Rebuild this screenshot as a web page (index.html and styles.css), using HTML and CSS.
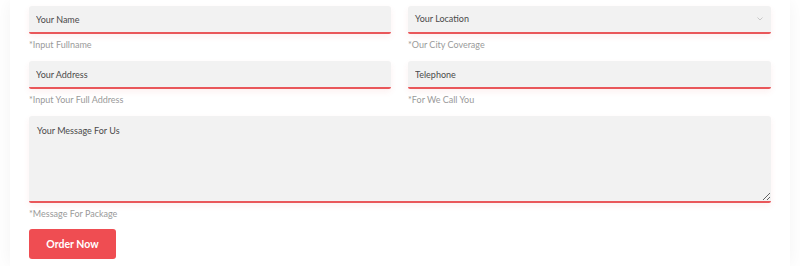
FILE: index.html
```html
<!DOCTYPE html>
<html lang="en">
<head>
    <meta charset="UTF-8">
    <meta name="viewport" content="width=device-width, initial-scale=1.0">
    <title>Order Form</title>
    <link rel="stylesheet" href="styles.css">
</head>
<body>
    <div class="container">
        <form class="order-form">
            <div class="grid">
                <div class="field">
                    <input class="input" type="text" placeholder="Your Name">
                    <span class="help">*Input Fullname</span>
                </div>
                <div class="field">
                    <div class="select">
                        <span class="select-text">Your Location</span>
                        <svg class="arrow" width="6" height="4" viewBox="0 0 6 4">
                            <path d="M0.5 0.5 L3 3 L5.5 0.5" fill="none" stroke="#c8c8c8" stroke-width="1"/>
                        </svg>
                    </div>
                    <span class="help">*Our City Coverage</span>
                </div>
                <div class="field">
                    <input class="input" type="text" placeholder="Your Address">
                    <span class="help">*Input Your Full Address</span>
                </div>
                <div class="field">
                    <input class="input" type="text" placeholder="Telephone">
                    <span class="help">*For We Call You</span>
                </div>
                <div class="field wide">
                    <textarea class="input message" placeholder="Your Message For Us"></textarea>
                    <span class="help">*Message For Package</span>
                </div>
            </div>
            <button class="btn" type="button">Order Now</button>
        </form>
    </div>
</body>
</html>
```

FILE: styles.css
```css
* {
    padding: 0;
    margin: 0;
    box-sizing: border-box;
}

html, body {
    height: 100%;
    background-color: #ffffff;
    font-family: Lato, "Open Sans", Arial, sans-serif;
}

.container {
    margin: 0 10px;
    height: 100%;
    padding: 6px 19px 0 19px;
    box-shadow: 0 0 18px rgba(0, 0, 0, 0.05);
}

.grid {
    display: grid;
    grid-template-columns: 362px 363px;
    column-gap: 17px;
}

.field {
    display: flex;
    flex-direction: column;
    margin-bottom: 10px;
}

.wide {
    grid-column: span 2;
    margin-bottom: 9px;
}

.input, .select {
    height: 28px;
    width: 100%;
    background-color: #f2f2f2;
    border: none;
    border-bottom: 2px solid #e9575a;
    border-radius: 3px 3px 2px 2px;
    padding: 0 7px;
    font-family: inherit;
    font-size: 9px;
    color: #4a4a4a;
    outline: none;
    box-shadow: 0 3px 6px rgba(234, 75, 79, 0.08);
}

.input::placeholder {
    color: #4a4a4a;
}

.select {
    display: flex;
    align-items: center;
    justify-content: space-between;
    padding: 0 8px 1px 7px;
}

.message {
    height: 87px;
    padding: 9px 8px;
    resize: vertical;
}

.help {
    margin-top: 4px;
    line-height: 13px;
    font-size: 9px;
    color: #9a9a9a;
}

.btn {
    width: 87px;
    height: 30px;
    border: none;
    border-radius: 3px;
    background-color: #ef4d52;
    color: #fff;
    font-family: inherit;
    font-weight: 700;
    font-size: 10.5px;
    cursor: pointer;
}
```
